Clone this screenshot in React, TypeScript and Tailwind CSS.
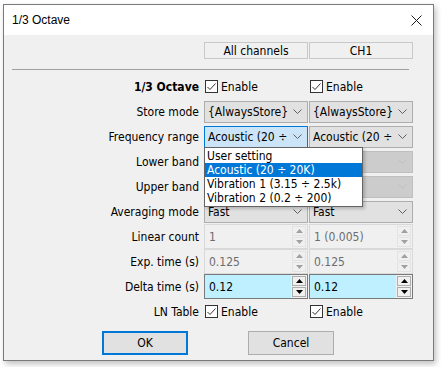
import type { ReactNode } from 'react'

const FONT = "font-['DejaVu_Sans_Condensed','DejaVu_Sans','Noto_Sans_CJK_SC',sans-serif]"

function Chevron({ color = '#606060' }: { color?: string }) {
  return (
    <svg width="9" height="5" viewBox="0 0 9 5" className="shrink-0">
      <polyline points="0.5,0.5 4.5,4.5 8.5,0.5" fill="none" stroke={color} strokeWidth="1" />
    </svg>
  )
}

function Check() {
  return (
    <span className="inline-flex h-[13px] w-[13px] shrink-0 items-center justify-center border border-[#333333] bg-white">
      <svg width="9" height="8" viewBox="0 0 9 8">
        <polyline points="0.5,4 3,6.5 8.5,0.5" fill="none" stroke="#333333" strokeWidth="1" />
      </svg>
    </span>
  )
}

function CheckCell() {
  return (
    <div className="flex items-center gap-[3px] pl-[1px]">
      <Check />
      <span>Enable</span>
    </div>
  )
}

type ComboKind = 'normal' | 'focus' | 'disabled'

function Combo({ value, kind = 'normal' }: { value?: string; kind?: ComboKind }) {
  const box =
    kind === 'focus'
      ? 'border-[#0078d7] bg-[#cce4f7]'
      : kind === 'disabled'
      ? 'border-[#bfbfbf] bg-[#cccccc]'
      : 'border-[#adadad] bg-[#e1e1e1]'
  return (
    <div className={`flex h-[22px] items-center justify-between border pl-[3px] pr-[5px] ${box}`}>
      <span className="truncate whitespace-nowrap">{value}</span>
      <Chevron color={kind === 'disabled' ? '#bfbfbf' : '#606060'} />
    </div>
  )
}

function Arrow({ up, color }: { up?: boolean; color: string }) {
  return (
    <svg width="7" height="4" viewBox="0 0 7 4">
      <polygon points={up ? '0,4 7,4 3.5,0' : '0,0 7,0 3.5,4'} fill={color} />
    </svg>
  )
}

function Spin({ value, active = false }: { value: string; active?: boolean }) {
  return (
    <div
      className={`flex h-[25px] border ${
        active ? 'border-[#7a7a7a] bg-[#bff0ff] text-black' : 'border-[#d9d9d9] bg-[#f0f0f0] text-[#6d6d6d]'
      }`}
    >
      <div className="flex flex-1 items-center pl-[4px]">{value}</div>
      <div className={`flex w-[16px] flex-col gap-[1px] p-[1px] ${active ? 'bg-[#f0f0f0]' : ''}`}>
        <div className={`flex flex-1 items-center justify-center ${active ? 'border border-[#adadad] bg-[#f0f0f0]' : 'border border-[#e3e3e3]'}`}>
          <Arrow up color={active ? '#000000' : '#a0a0a0'} />
        </div>
        <div className={`flex flex-1 items-center justify-center ${active ? 'border border-[#adadad] bg-[#f0f0f0]' : 'border border-[#e3e3e3]'}`}>
          <Arrow color={active ? '#000000' : '#a0a0a0'} />
        </div>
      </div>
    </div>
  )
}

function Row({ label, bold, left, right }: { label: string; bold?: boolean; left: ReactNode; right: ReactNode }) {
  return (
    <div className="grid h-[25px] grid-cols-[199px_104px_104px] items-center gap-x-[1px]">
      <div className={`pr-[4px] text-right ${bold ? 'font-bold' : ''}`}>{label}</div>
      <div>{left}</div>
      <div>{right}</div>
    </div>
  )
}

export default function App() {
  return (
    <div className={`h-[367px] w-[441px] bg-white text-[12px] text-black ${FONT}`}>
      <div className="ml-[3px] pt-[4px]">
        <div className="relative flex h-[357px] w-[431px] flex-col border border-[#7a7a7a] bg-[#f0f0f0] shadow-[2px_3px_6px_rgba(0,0,0,0.25)]">
          {/* title bar */}
          <div className="flex h-[30px] items-center justify-between bg-white pl-[8px] pr-[11px]">
            <span className="font-['Liberation_Sans',sans-serif] text-[12px]">1/3 Octave</span>
            <svg width="11" height="11" viewBox="0 0 11 11">
              <path d="M0.5 0.5 L10.5 10.5 M10.5 0.5 L0.5 10.5" stroke="#1a1a1a" strokeWidth="1" />
            </svg>
          </div>

          {/* column headers */}
          <div className="mt-[7px] flex pl-[200px]">
            <div className="flex h-[17px] w-[104px] items-center justify-center border border-[#c8c8c8]">All channels</div>
            <div className="ml-[1px] flex h-[17px] w-[104px] items-center justify-center border border-[#c8c8c8]">CH1</div>
          </div>

          <div className="ml-[8px] mt-[10px] h-[2px] w-[397px] border-t border-[#a0a0a0] border-b-white" />

          <div className="mt-[3px] flex flex-col">
            <Row label="1/3 Octave" bold left={<CheckCell />} right={<CheckCell />} />
            <Row label="Store mode" left={<Combo value="{AlwaysStore}" />} right={<Combo value="{AlwaysStore}" />} />
            <Row
              label="Frequency range"
              left={<Combo value="Acoustic (20 ÷" kind="focus" />}
              right={<Combo value="Acoustic (20 ÷" />}
            />
            <Row label="Lower band" left={<Combo kind="disabled" />} right={<Combo kind="disabled" />} />
            <Row label="Upper band" left={<Combo kind="disabled" />} right={<Combo kind="disabled" />} />
            <Row label="Averaging mode" left={<Combo value="Fast" />} right={<Combo value="Fast" />} />
            <Row label="Linear count" left={<Spin value="1" />} right={<Spin value="1 (0.005)" />} />
            <Row label="Exp. time (s)" left={<Spin value="0.125" />} right={<Spin value="0.125" />} />
            <Row label="Delta time (s)" left={<Spin value="0.12" active />} right={<Spin value="0.12" active />} />
            <Row label="LN Table" left={<CheckCell />} right={<CheckCell />} />
          </div>

          <div className="mt-[7px] flex gap-[60px] pl-[98px]">
            <button className="h-[24px] w-[86px] border-2 border-[#0078d7] bg-[#e1e1e1]">OK</button>
            <button className="h-[24px] w-[86px] border border-[#adadad] bg-[#e1e1e1]">Cancel</button>
          </div>

          {/* open dropdown list */}
          <div className="absolute left-[200px] top-[142px] flex w-[159px] flex-col border border-[#646464] bg-white py-[1px] leading-[14px] shadow-[2px_2px_3px_rgba(0,0,0,0.2)]">
            <div className="px-[2px]">User setting</div>
            <div className="bg-[#0078d7] px-[2px] text-white">Acoustic (20 ÷ 20K)</div>
            <div className="px-[2px]">Vibration 1 (3.15 ÷ 2.5k)</div>
            <div className="px-[2px]">Vibration 2 (0.2 ÷ 200)</div>
          </div>
        </div>
      </div>
    </div>
  )
}
